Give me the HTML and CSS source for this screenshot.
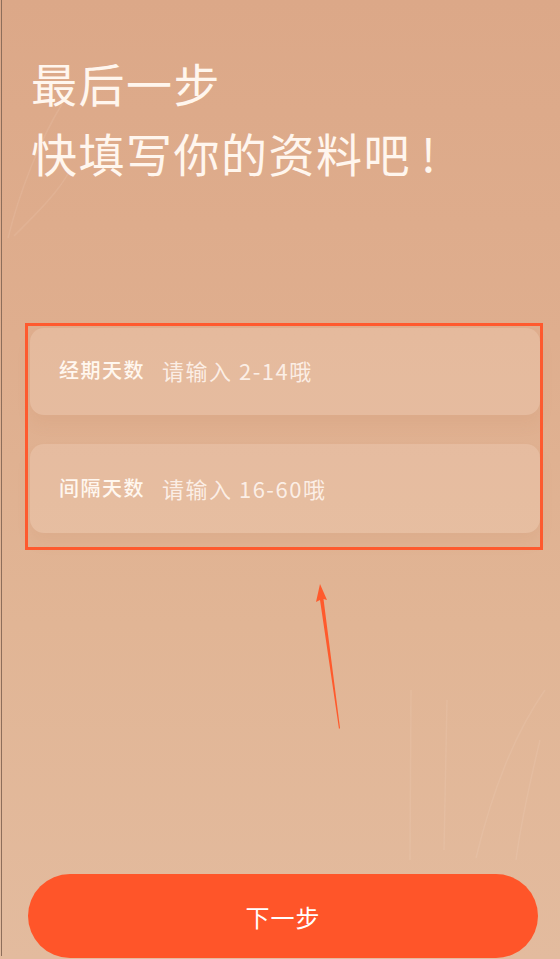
FILE: index.html
```html
<!DOCTYPE html>
<html lang="zh-CN">
<head>
<meta charset="utf-8">
<title>最后一步</title>
<link rel="stylesheet" href="styles.css">
</head>
<body>
<div class="page">
  <svg class="deco" width="560" height="959" viewBox="0 0 560 959" aria-hidden="true">
    <path d="M8 238 C 20 190, 40 140, 62 104" />
    <path d="M14 236 C 40 210, 60 190, 70 170" />
    <path d="M411 690 L 410 860" />
    <path d="M447 700 L 444 850" />
    <path d="M545 690 C 510 740, 490 800, 476 858" />
    <path d="M540 740 C 528 790, 520 830, 516 860" />
  </svg>
  <div class="edge"></div>

  <h1 class="title">最后一步<br>快填写你的资料吧<span class="bang">!</span></h1>

  <div class="form-box">
    <div class="field field-first">
      <span class="label">经期天数</span>
      <span class="placeholder">请输入 2-14哦</span>
    </div>
    <div class="field field-second">
      <span class="label">间隔天数</span>
      <span class="placeholder">请输入 16-60哦</span>
    </div>
  </div>

  <svg class="arrow" width="60" height="160" viewBox="0 0 60 160" aria-hidden="true">
    <polygon points="20,0 27,16 23.5,15 40,144 39,145 20,16 16,18" fill="#ff5a2c" />
  </svg>

  <div class="spacer"></div>

  <button class="next-btn" type="button">下一步</button>
</div>
</body>
</html>
```

FILE: styles.css
```css
* {
  box-sizing: border-box;
}

html, body {
  margin: 0;
  padding: 0;
}

body {
  width: 560px;
  height: 959px;
  overflow: hidden;
  font-family: "Noto Sans CJK SC", "Noto Sans", sans-serif;
  background: linear-gradient(180deg, #dca888 0%, #dfae8e 35%, #e1b595 65%, #e3bb9e 100%);
}

.page {
  position: relative;
  width: 560px;
  height: 959px;
  display: flex;
  flex-direction: column;
}

.deco {
  position: absolute;
  left: 0;
  top: 0;
  pointer-events: none;
}

.deco path {
  fill: none;
  stroke: rgba(255, 240, 228, 0.1);
  stroke-width: 1.5;
}

.edge {
  position: absolute;
  left: 1px;
  top: 0;
  width: 1px;
  height: 956px;
  background: #8d6e5b;
}

.title {
  margin: 47px 0 0 31px;
  font-size: 46px;
  line-height: 70px;
  font-weight: 400;
  color: #fff6ee;
  letter-spacing: 1.5px;
}

.bang {
  margin-left: 10px;
}

.form-box {
  margin: 136px 0 0 25px;
  width: 518px;
  height: 227px;
  border: 3px solid #ff5a2e;
  padding: 2px 0 0 2px;
  display: flex;
  flex-direction: column;
  gap: 29px;
}

.field {
  width: 510px;
  height: 87px;
  border-radius: 14px;
  background: rgba(255, 236, 222, 0.2);
  box-shadow: 0 10px 14px rgba(196, 128, 88, 0.1);
  display: flex;
  align-items: center;
  padding-left: 29px;
  padding-bottom: 4px;
}

.field-second {
  height: 89px;
  padding-bottom: 2px;
}

.label {
  font-size: 20px;
  font-weight: 500;
  color: #fff7ef;
  width: 103px;
  flex: none;
  letter-spacing: 1.5px;
}

.placeholder {
  font-size: 22px;
  color: rgba(255, 246, 240, 0.88);
  letter-spacing: 1.5px;
}

.arrow {
  position: absolute;
  left: 300px;
  top: 584px;
}

.spacer {
  flex: 1;
}

.next-btn {
  margin: 0 0 1px 28px;
  width: 510px;
  height: 84px;
  border: none;
  border-radius: 42px;
  background: #ff5529;
  color: #ffffff;
  font-family: "Noto Sans CJK SC", "Noto Sans", sans-serif;
  font-size: 24px;
  font-weight: 400;
  letter-spacing: 1px;
  padding: 0;
}
```
